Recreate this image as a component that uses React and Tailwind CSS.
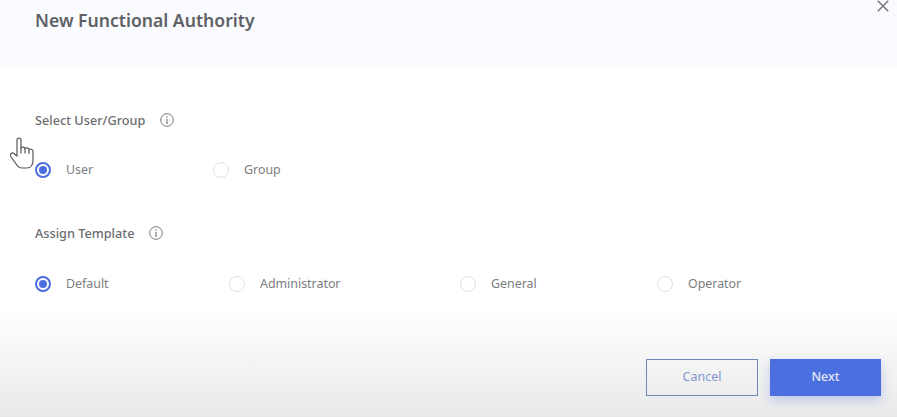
import React from "react";

const font = "font-['Noto_Sans',sans-serif]";

function InfoIcon() {
    return (
        <svg width="14" height="14" viewBox="0 0 14 14" fill="none" className="text-[#77797d]">
            <circle cx="7" cy="7" r="6.3" stroke="currentColor" strokeWidth="1" />
            <path d="M7 6.2v4" stroke="currentColor" strokeWidth="1.1" />
            <path d="M6 6.3h1M6 10.2h2" stroke="currentColor" strokeWidth="0.8" />
            <circle cx="7" cy="4.1" r="0.75" fill="currentColor" />
        </svg>
    );
}

function Radio({ label, checked, width }) {
    return (
        <div className={`flex items-center ${width}`}>
            {checked ? (
                <span className="flex h-4 w-4 shrink-0 items-center justify-center rounded-full border-2 border-[#4b6fdf]">
                    <span className="h-2 w-2 rounded-full bg-[#4b6fdf]" />
                </span>
            ) : (
                <span className="h-4 w-4 shrink-0 rounded-full border border-[#e0e3e6] bg-white" />
            )}
            <span className="ml-[15px] pt-px text-[12.4px] leading-4 text-[#7b7d80]">{label}</span>
        </div>
    );
}

function SectionLabel({ children }) {
    return (
        <div className="flex h-5 items-center">
            <span className="text-[12.7px] leading-5 font-medium text-[#6b6d70]">{children}</span>
            <span className="ml-[15px] flex">
                <InfoIcon />
            </span>
        </div>
    );
}

export default function App() {
    return (
        <div className={`relative flex h-[417px] w-[897px] flex-col overflow-hidden bg-white ${font}`}>
            {/* Header */}
            <div className="h-[66px] shrink-0 bg-[#fafbff] px-[35px] pt-[7px]">
                <h1 className="text-[17.6px] leading-[26px] font-semibold text-[#5f6165]">New Functional Authority</h1>
            </div>

            {/* Close */}
            <svg width="12" height="12" viewBox="0 0 12 12" className="absolute top-0 right-[8px] text-[#6f7175]">
                <path d="M0.8 0.8l10.4 10.4M11.2 0.8L0.8 11.2" stroke="currentColor" strokeWidth="1.4" />
            </svg>

            {/* Form */}
            <div className="flex flex-col px-[35px] pt-[44px]">
                <SectionLabel>Select User/Group</SectionLabel>
                <div className="mt-[31px] flex">
                    <Radio label="User" checked width="w-[178px]" />
                    <Radio label="Group" />
                </div>
                <div className="mt-[45px]">
                    <SectionLabel>Assign Template</SectionLabel>
                </div>
                <div className="mt-[32px] flex">
                    <Radio label="Default" checked width="w-[194px]" />
                    <Radio label="Administrator" width="w-[231px]" />
                    <Radio label="General" width="w-[197px]" />
                    <Radio label="Operator" />
                </div>
            </div>

            {/* Footer */}
            <div className="absolute inset-x-0 bottom-0 flex h-[107px] items-end justify-end gap-3 bg-gradient-to-b from-white to-[#e9e9ea] pr-4 pb-[21px]">
                <button className="h-[37px] w-[112px] border border-[#6f88b8] text-[12.5px] text-[#8496cf]">Cancel</button>
                <button className="h-[37px] w-[111px] bg-[#4b6fdf] text-[12.5px] font-medium text-[#e4e9f8] shadow-[0_4px_10px_rgba(75,111,223,0.3)]">Next</button>
            </div>

            {/* Hand cursor */}
            <svg width="28" height="34" viewBox="0 0 28 34" fill="white" stroke="#55575a" strokeWidth="1.2" strokeLinejoin="round" strokeLinecap="round" className="absolute top-[136px] left-[8px]">
                <path d="M9 20V4c0-2.600 4-2.600 4 0v8c2-1.500 4-1 4 .5 2-1 4-.5 4 1 2-.8 4 0 4 2V24c0 5-2.500 8-6 8h-5c-2.500 0-4-1-5.500-3.500L3 21c-1.800-2.500.8-5 3-3.500z" />
                <path d="M13 12v5M17 12.500v4.500M21 13.500v4" fill="none" />
            </svg>
        </div>
    );
}
